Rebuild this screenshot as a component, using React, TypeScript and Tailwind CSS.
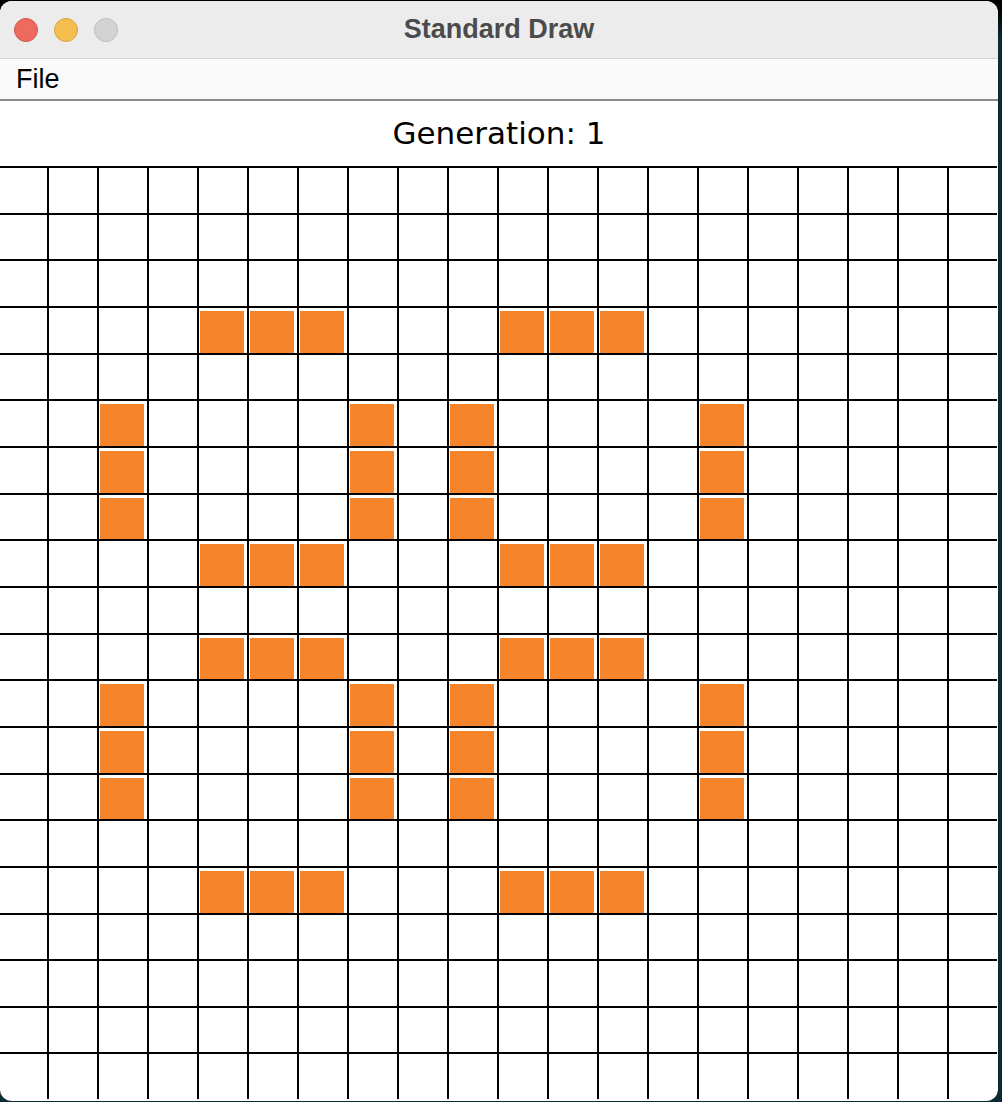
import React from "react";

const COLS = 20;
const ROWS = 20;

// live cells of the pulsar, as "row,col"
const live = new Set<string>();
const bars = [3, 8, 10, 15];
const barCols = [4, 5, 6, 10, 11, 12];
const posts = [5, 6, 7, 11, 12, 13];
const postCols = [2, 7, 9, 14];
bars.forEach((r) => barCols.forEach((c) => live.add(`${r},${c}`)));
posts.forEach((r) => postCols.forEach((c) => live.add(`${r},${c}`)));

function TrafficLights() {
  return (
    <div className="flex items-center gap-[16px] pl-[14px]">
      <span className="w-[24px] h-[24px] rounded-full bg-[#ee6a5f] border border-[#d5564b]" />
      <span className="w-[24px] h-[24px] rounded-full bg-[#f5bf4f] border border-[#d9a43c]" />
      <span className="w-[24px] h-[24px] rounded-full bg-[#d3d3d3] border border-[#bdbdbd]" />
    </div>
  );
}

function Board() {
  const cells = [];
  for (let r = 0; r < ROWS; r++) {
    for (let c = 0; c < COLS; c++) {
      const on = live.has(`${r},${c}`);
      cells.push(
        <div key={`${r}-${c}`} className="bg-white pl-px pt-[3px] pr-[3px]">
          {on && <div className="w-full h-full bg-[#f5842b]" />}
        </div>
      );
    }
  }
  return (
    <div className="-ml-px w-[998px] grid grid-cols-[repeat(20,48px)] grid-rows-[repeat(20,44.67px)] gap-[2px] bg-black border-t-2 border-black">
      {cells}
    </div>
  );
}

export default function App() {
  return (
    <div className="w-[1002px] h-[1102px] bg-[linear-gradient(to_bottom,#000_0px,#000_8px,#0b2b33_40px)] overflow-hidden">
      <div className="mt-px w-[998px] h-[1100px] rounded-[12px] overflow-hidden flex flex-col bg-white">
        <header className="relative h-[58px] shrink-0 bg-[#ececec] border-b border-[#d2d2d2] flex items-center">
          <TrafficLights />
          <h1 className="absolute inset-0 flex items-center justify-center font-['Liberation_Sans',Arial,sans-serif] font-bold text-[27px] text-[#4b4b4b]">
            Standard Draw
          </h1>
        </header>
        <nav className="h-[42px] shrink-0 bg-[#fafafa] border-b-2 border-[#8a8a8a] flex items-center pl-[16px]">
          <span className="font-['Liberation_Sans',Arial,sans-serif] text-[27px] text-black leading-none">
            File
          </span>
        </nav>
        <div className="h-[65px] shrink-0 flex items-center justify-center">
          <span className="font-['DejaVu_Sans',sans-serif] text-[31px] text-black leading-none">
            Generation: 1
          </span>
        </div>
        <Board />
      </div>
    </div>
  );
}
